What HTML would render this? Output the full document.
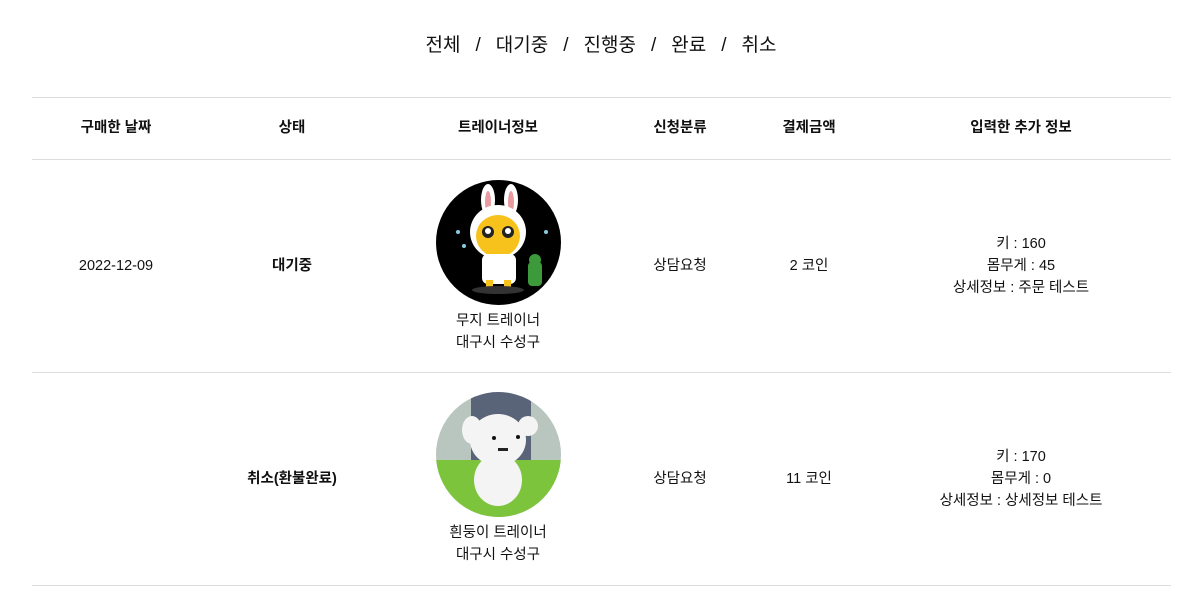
<!DOCTYPE html>
<html><head><meta charset="utf-8"><style>
body{margin:0;width:1195px;height:592px;background:#fff;font-family:"Liberation Sans","Noto Sans CJK KR",sans-serif;color:#111;position:relative;overflow:hidden}
.t{position:absolute;transform:translateX(-50%);white-space:nowrap;font-size:14.5px;text-align:center;line-height:22px}
.b{font-weight:bold}
.line{position:absolute;left:32px;width:1139px;height:1px;background:#ddd}
.s{margin:0 15px}
</style></head><body>
<div class="t" style="left:601px;top:33px;font-size:19px;line-height:26px">전체<span class="s">/</span>대기중<span class="s">/</span>진행중<span class="s">/</span>완료<span class="s">/</span>취소</div>
<div class="line" style="top:97px"></div>
<div class="t b" style="left:116px;top:117px">구매한 날짜</div>
<div class="t b" style="left:292px;top:117px">상태</div>
<div class="t b" style="left:498px;top:117px">트레이너정보</div>
<div class="t b" style="left:680px;top:117px">신청분류</div>
<div class="t b" style="left:809px;top:117px">결제금액</div>
<div class="t b" style="left:1021px;top:117px">입력한 추가 정보</div>
<div class="line" style="top:159px"></div>

<div class="t" style="left:116px;top:255px">2022-12-09</div>
<div class="t b" style="left:292px;top:255px">대기중</div>
<svg style="position:absolute;left:436px;top:180px" width="125" height="125" viewBox="0 0 125 125">
<clipPath id="c1"><circle cx="62.5" cy="62.5" r="62.5"/></clipPath>
<g clip-path="url(#c1)"><rect width="125" height="125" fill="#000"/>
<ellipse cx="52" cy="20" rx="7" ry="16" fill="#fff"/><ellipse cx="75" cy="20" rx="7" ry="16" fill="#fff"/>
<ellipse cx="52" cy="22" rx="3" ry="11" fill="#e89aa0"/><ellipse cx="75" cy="22" rx="3" ry="11" fill="#e89aa0"/>
<ellipse cx="62" cy="52" rx="28" ry="27" fill="#fff"/><ellipse cx="62" cy="56" rx="22" ry="21" fill="#f6c21b"/>
<rect x="46" y="74" width="34" height="30" rx="6" fill="#fff"/><rect x="50" y="100" width="7" height="10" fill="#f6c21b"/><rect x="68" y="100" width="7" height="10" fill="#f6c21b"/>
<ellipse cx="62" cy="110" rx="26" ry="4" fill="#333"/>
<circle cx="52" cy="52" r="6" fill="#222"/><circle cx="72" cy="52" r="6" fill="#222"/>
<circle cx="52" cy="51" r="3" fill="#fff"/><circle cx="72" cy="51" r="3" fill="#fff"/>
<rect x="92" y="82" width="14" height="24" rx="4" fill="#3c9a3a"/><circle cx="99" cy="80" r="6" fill="#3c9a3a"/>
<circle cx="22" cy="52" r="2" fill="#8cd"/><circle cx="28" cy="66" r="2" fill="#8cd"/><circle cx="110" cy="52" r="2" fill="#8cd"/>
</g></svg>
<div class="t" style="left:498px;top:310px">무지 트레이너<br>대구시 수성구</div>
<div class="t" style="left:680px;top:255px">상담요청</div>
<div class="t" style="left:809px;top:255px">2 코인</div>
<div class="t" style="left:1021px;top:233px">키 : 160<br>몸무게 : 45<br>상세정보 : 주문 테스트</div>
<div class="line" style="top:372px"></div>

<div class="t b" style="left:292px;top:468px">취소(환불완료)</div>
<svg style="position:absolute;left:436px;top:392px" width="125" height="125" viewBox="0 0 125 125">
<clipPath id="c2"><circle cx="62.5" cy="62.5" r="62.5"/></clipPath>
<g clip-path="url(#c2)"><rect width="125" height="125" fill="#b9c6bf"/>
<rect x="35" y="0" width="60" height="70" fill="#5a6478"/><rect x="0" y="68" width="125" height="57" fill="#7cc43c"/>
<ellipse cx="62" cy="48" rx="28" ry="26" fill="#f4f4f4"/><ellipse cx="62" cy="88" rx="24" ry="26" fill="#f4f4f4"/>
<ellipse cx="36" cy="38" rx="10" ry="14" fill="#f4f4f4"/><ellipse cx="92" cy="34" rx="10" ry="10" fill="#f4f4f4"/>
<circle cx="58" cy="46" r="2" fill="#111"/><circle cx="82" cy="45" r="2" fill="#111"/><rect x="62" y="56" width="10" height="3" fill="#222"/>
</g></svg>
<div class="t" style="left:498px;top:522px">흰둥이 트레이너<br>대구시 수성구</div>
<div class="t" style="left:680px;top:468px">상담요청</div>
<div class="t" style="left:809px;top:468px">11 코인</div>
<div class="t" style="left:1021px;top:446px">키 : 170<br>몸무게 : 0<br>상세정보 : 상세정보 테스트</div>
<div class="line" style="top:585px"></div>
</body></html>
